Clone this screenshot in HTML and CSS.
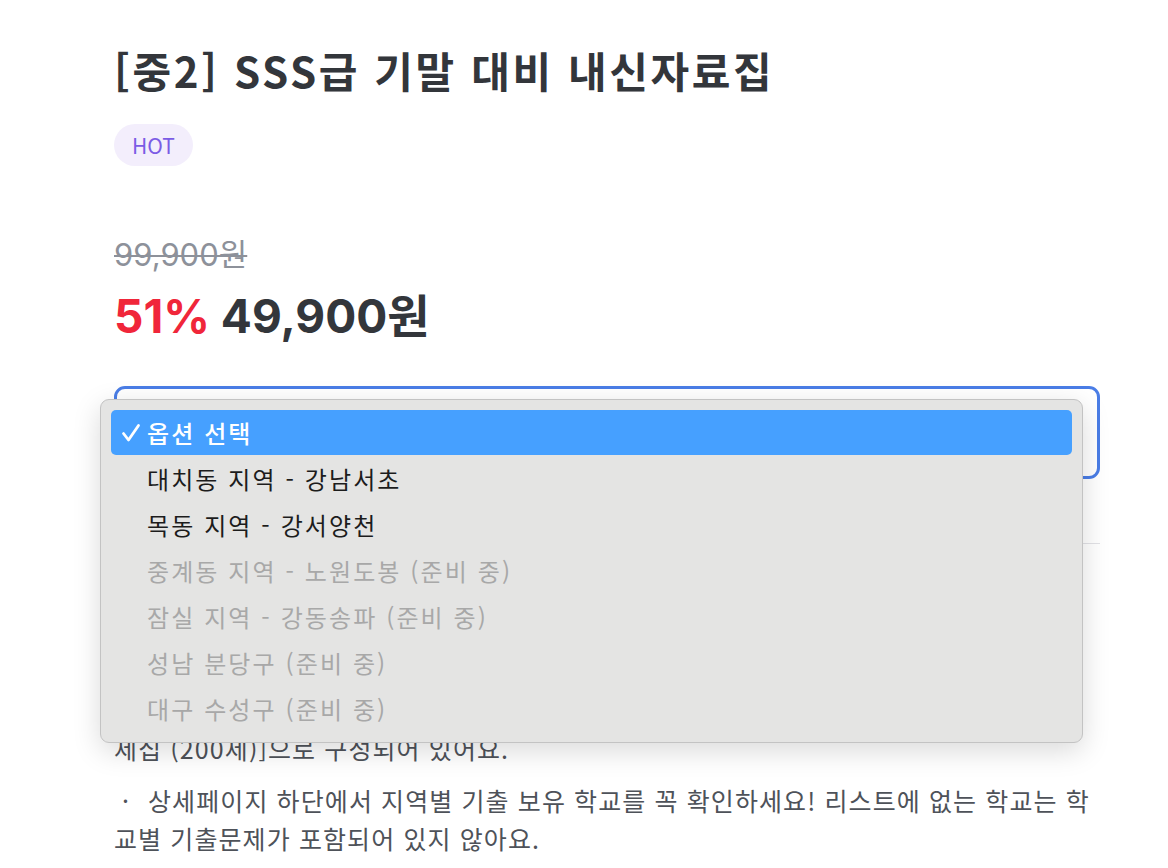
FILE: index.html
```html
<!DOCTYPE html>
<html lang="ko">
<head>
<meta charset="utf-8">
<title>[중2] SSS급 기말 대비 내신자료집</title>
<link rel="stylesheet" href="styles.css">
</head>
<body>
<main class="product">
  <h1 class="title">[중2] SSS급 기말 대비 내신자료집</h1>
  <div class="tags"><span class="tag">HOT</span></div>

  <div class="price">
    <div class="price-original">99,900원</div>
    <div class="price-sale"><span class="rate">51%</span> <span class="amount">49,900원</span></div>
  </div>

  <div class="select-wrap">
    <div class="select">
      <span class="select-label">옵션 선택</span>
    </div>
    <ul class="popup">
      <li class="opt selected">
        <svg class="check" width="20" height="20" viewBox="0 0 20 20" aria-hidden="true"><path d="M2.5 10.5 L7.5 17 L17.5 2.5" fill="none" stroke="#ffffff" stroke-width="2.8" stroke-linecap="round" stroke-linejoin="round"/></svg>옵션 선택
      </li>
      <li class="opt">대치동 지역 - 강남서초</li>
      <li class="opt">목동 지역 - 강서양천</li>
      <li class="opt disabled">중계동 지역 - 노원도봉 (준비 중)</li>
      <li class="opt disabled">잠실 지역 - 강동송파 (준비 중)</li>
      <li class="opt disabled">성남 분당구 (준비 중)</li>
      <li class="opt disabled">대구 수성구 (준비 중)</li>
    </ul>
  </div>

  <hr class="divider">

  <div class="desc">
    <p class="item">학교별 기출문제와 함께 내신 대비 자료가 제공돼요.</p>
    <p class="item">지역별 구성은 [학교별 기출문제 + 학교별 예상문제 +<br>내신 대비 문제집 + 기말 대비 문<br>제집 (200제)]으로 구성되어 있어요.</p>
    <p class="item">상세페이지 하단에서 지역별 기출 보유 학교를 꼭 확인하세요! 리스트에 없는 학교는 학교별 기출문제가 포함되어 있지 않아요.</p>
  </div>
</main>
</body>
</html>
```

FILE: styles.css
```css
html, body {
  margin: 0;
  padding: 0;
  background: #ffffff;
}

body {
  font-family: "Noto Sans CJK KR", "Noto Sans", sans-serif;
  color: #33363b;
}

.product {
  width: 986px;
  padding: 42px 0 0 114px;
}

.title {
  margin: 0;
  font-size: 42px;
  line-height: 56px;
  font-weight: 700;
  color: #33363b;
  letter-spacing: 2.6px;
}

.tags {
  display: flex;
  margin-top: 26px;
}

.tag {
  display: inline-flex;
  align-items: center;
  justify-content: center;
  height: 42px;
  width: 79px;
  border-radius: 21px;
  background: #f3eefc;
  color: #7b5ce5;
  font-size: 21px;
  font-family: "Noto Sans CJK KR", sans-serif;
}

.price {
  margin-top: 70px;
}

.price-original {
  font-family: Inter, "Noto Sans CJK KR", sans-serif;
  font-size: 31px;
  line-height: 38px;
  color: #8d919a;
  text-decoration: line-through;
  text-decoration-thickness: 2px;
}

.price-sale {
  margin-top: 14px;
  font-family: Inter, "Noto Sans CJK KR", sans-serif;
  font-size: 46px;
  line-height: 56px;
  font-weight: 700;
}

.rate {
  color: #f0263a;
}

.amount {
  color: #33363b;
}

.select-wrap {
  position: relative;
  margin-top: 42px;
}

.select {
  box-sizing: border-box;
  height: 93px;
  border: 3px solid #4a7de6;
  border-radius: 11px;
  display: flex;
  align-items: center;
  padding: 0 24px;
  font-size: 22px;
  color: #33363b;
}

.popup {
  position: absolute;
  left: -14px;
  top: 13px;
  width: 983px;
  box-sizing: border-box;
  margin: 0;
  padding: 10px 10px 11px 10px;
  list-style: none;
  background: #e4e4e3;
  border: 1px solid #c3c3c3;
  border-radius: 9px;
  box-shadow: 0 8px 28px rgba(0, 0, 0, 0.15);
  z-index: 10;
}

.opt {
  height: 46px;
  display: flex;
  align-items: center;
  padding-left: 36px;
  font-size: 24px;
  letter-spacing: 2.1px;
  color: #1c1c1c;
  border-radius: 5px;
  position: relative;
}

.opt.selected {
  height: 45px;
  background: #46a0ff;
  color: #ffffff;
  font-weight: 500;
}

.check {
  position: absolute;
  left: 10px;
  top: 13px;
}

.opt.disabled {
  color: #a8a8a8;
}

.divider {
  margin: 64px 0 0 0;
  border: 0;
  border-top: 1px solid #e2e2e6;
}

.desc {
  margin-top: 57px;
  padding-right: 8px;
  font-size: 25px;
  line-height: 38px;
  color: #4e5259;
  letter-spacing: 1.1px;
}

.desc p {
  margin: 0;
}

.desc .item + .item {
  margin-top: 14px;
}

.desc .item::before {
  content: "·";
  display: inline-block;
  width: 34px;
  padding-left: 8px;
  box-sizing: border-box;
}
```
